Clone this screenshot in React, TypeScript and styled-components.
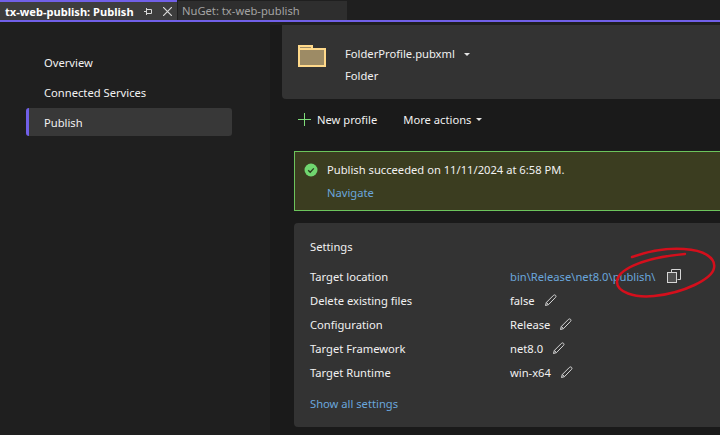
import styled, { createGlobalStyle } from 'styled-components';

const GlobalStyle = createGlobalStyle`
  html, body {
    margin: 0;
    padding: 0;
    background: #1f1f1f;
  }
  * {
    box-sizing: border-box;
  }
`;

const Window = styled.div`
  width: 720px;
  height: 435px;
  overflow: hidden;
  display: flex;
  flex-direction: column;
  font-family: "Noto Sans", "Open Sans", sans-serif;
  font-size: 11.2px;
  line-height: 15px;
  color: #f1f1f1;
  background: #1f1f1f;
`;

const TabBar = styled.div`
  height: 22px;
  flex: none;
  display: flex;
  align-items: flex-end;
  background: #1f1f1f;
  border-bottom: 2px solid #7160e8;
`;

const ActiveTab = styled.div`
  width: 177px;
  height: 20px;
  display: flex;
  align-items: center;
  padding: 0 0 0 5px;
  background: #3d3d3d;
  border-top: 2px solid #7160e8;
  font-weight: 700;
  font-size: 11.1px;
  white-space: nowrap;
  color: #ffffff;
`;

const TabTitle = styled.span`
  width: 139px;
  flex: none;
`;

const TabIcon = styled.span`
  display: flex;
  align-items: center;
  margin-right: 10px;
  color: #d8d8d8;
`;

const InactiveTab = styled.div`
  width: 169px;
  height: 19px;
  margin-left: 1px;
  display: flex;
  align-items: center;
  padding-left: 4px;
  background: #2e2e2e;
  color: #a3a3a3;
  white-space: nowrap;
`;

const Body = styled.div`
  flex: 1;
  display: flex;
  min-height: 0;
`;

const Sidebar = styled.nav`
  width: 270px;
  flex: none;
  padding: 26px 38px 0 26px;
  display: flex;
  flex-direction: column;
  gap: 2px;
`;

const NavItem = styled.div<{ $active?: boolean }>`
  height: 28px;
  display: flex;
  align-items: center;
  padding-left: 15px;
  border-radius: 3px;
  border-left: 3px solid ${p => (p.$active ? '#7160e8' : 'transparent')};
  background: ${p => (p.$active ? '#383838' : 'transparent')};
`;

const Main = styled.main`
  flex: 1;
  min-width: 0;
  margin-top: 3px;
  padding: 0 0 0 12px;
  background: #1a1a1a;
  display: flex;
  flex-direction: column;
`;

const ProfileCard = styled.section`
  height: 74px;
  flex: none;
  display: flex;
  align-items: flex-start;
  gap: 19px;
  padding: 20px 0 0 16px;
  background: #333333;
  border-radius: 0 0 0 4px;
`;

const ProfileText = styled.div`
  display: flex;
  flex-direction: column;
  gap: 7px;
  margin-top: 1px;
`;

const ProfileName = styled.div`
  display: flex;
  align-items: center;
  gap: 9px;
`;

const Caret = styled.span`
  display: inline-block;
  width: 0;
  height: 0;
  margin-top: 1px;
  border-left: 3px solid transparent;
  border-right: 3px solid transparent;
  border-top: 3px solid #e6e6e6;
`;

const Toolbar = styled.div`
  height: 42px;
  flex: none;
  display: flex;
  align-items: center;
  padding: 0 0 2px 16px;
  gap: 26px;
`;

const ToolButton = styled.div`
  display: flex;
  align-items: center;
  gap: 6px;
`;

const MoreButton = styled(ToolButton)`
  gap: 5px;
`;

const Stack = styled.div`
  margin-left: 12px;
  margin-top: 10px;
  display: flex;
  flex-direction: column;
  gap: 12px;
`;

const Banner = styled.section`
  height: 60px;
  display: flex;
  gap: 9px;
  padding: 11px 0 0 9px;
  background: #3b3d20;
  border: 1px solid #6cc45c;
  border-right: none;
`;

const BannerText = styled.div`
  display: flex;
  flex-direction: column;
  gap: 8px;
  margin-top: -1px;
`;

const Link = styled.span`
  color: #6aa6dc;
`;

const SettingsCard = styled.section`
  height: 204px;
  padding: 16px 0 0 16px;
  background: #333333;
  border-radius: 4px 0 0 4px;
  position: relative;
`;

const CardTitle = styled.div`
  height: 15px;
  margin-bottom: 10px;
`;

const SettingRow = styled.div`
  height: 24px;
  display: grid;
  grid-template-columns: 200px 1fr;
  align-items: center;
`;

const SettingValue = styled.div`
  display: flex;
  align-items: center;
  gap: 9px;
`;

const ShowAll = styled(Link)`
  display: block;
  margin-top: 12px;
`;

const CopyButton = styled.span`
  display: flex;
  margin-left: 2px;
`;

const Scribble = styled.svg`
  position: absolute;
  left: 320px;
  top: 23px;
  pointer-events: none;
`;

const Folder = () => (
  <svg width="28" height="22" viewBox="0 0 28 22" fill="none">
    <path d="M1 1h13v3h13v17H1z" fill="#9d8b65" stroke="#ffd98a" strokeWidth="2" />
    <path d="M1 4h13" stroke="#ffd98a" strokeWidth="2" />
  </svg>
);

const PlusIcon = () => (
  <svg width="13" height="13" viewBox="0 0 13 13" stroke="#7fdc7a">
    <path d="M6.5 0v13M0 6.5h13" />
  </svg>
);

const PinIcon = () => (
  <svg width="9" height="9" viewBox="0 0 9 9" fill="none" stroke="currentColor">
    <path d="M0 4.5h2.5M2.5 2.5h5v4h-5zM2.5 1v7" />
  </svg>
);

const CloseIcon = () => (
  <svg width="9" height="9" viewBox="0 0 9 9" fill="none" stroke="currentColor" strokeWidth="1.2">
    <path d="M0 0l9 9M9 0L0 9" />
  </svg>
);

const SuccessIcon = () => (
  <svg width="14" height="14" viewBox="0 0 14 14" fill="none">
    <circle cx="7" cy="7" r="6.5" fill="#70d66f" />
    <path d="M4.2 7.2l2 2 3.6-3.8" stroke="#2a3a1e" strokeWidth="1.3" />
  </svg>
);

const Pencil = () => (
  <svg width="13" height="13" viewBox="0 0 13 13" fill="none" stroke="#d6d6d6">
    <path d="M1.5 11.5l.8-3L9.5 1.3c.6-.6 1.6-.5 2.1.1.5.6.5 1.4 0 1.9L4.5 10.6z" />
    <path d="M2.3 8.5l2.2 2.1" />
  </svg>
);

const CopyIcon = () => (
  <svg width="14" height="14" viewBox="0 0 14 14" fill="none" stroke="#d6d6d6">
    <path d="M4.5 3.5v-3h9v10h-3" />
    <rect x="0.5" y="3.5" width="9" height="10" fill="#505050" />
  </svg>
);

const settings = [
  { label: 'Delete existing files', value: 'false' },
  { label: 'Configuration', value: 'Release' },
  { label: 'Target Framework', value: 'net8.0' },
  { label: 'Target Runtime', value: 'win-x64' },
];

export default function App() {
  return (
    <>
      <GlobalStyle />
      <Window>
        <TabBar>
          <ActiveTab>
            <TabTitle>tx-web-publish: Publish</TabTitle>
            <TabIcon><PinIcon /></TabIcon>
            <TabIcon><CloseIcon /></TabIcon>
          </ActiveTab>
          <InactiveTab>NuGet: tx-web-publish</InactiveTab>
        </TabBar>
        <Body>
          <Sidebar>
            <NavItem>Overview</NavItem>
            <NavItem>Connected Services</NavItem>
            <NavItem $active>Publish</NavItem>
          </Sidebar>
          <Main>
            <ProfileCard>
              <Folder />
              <ProfileText>
                <ProfileName>FolderProfile.pubxml <Caret /></ProfileName>
                <div>Folder</div>
              </ProfileText>
            </ProfileCard>
            <Toolbar>
              <ToolButton>
                <PlusIcon />
                New profile
              </ToolButton>
              <MoreButton>More actions <Caret /></MoreButton>
            </Toolbar>
            <Stack>
              <Banner>
                <SuccessIcon />
                <BannerText>
                  <div>Publish succeeded on 11/11/2024 at 6:58 PM.</div>
                  <Link>Navigate</Link>
                </BannerText>
              </Banner>
              <SettingsCard>
                <CardTitle>Settings</CardTitle>
                <SettingRow>
                  <div>Target location</div>
                  <SettingValue>
                    <Link>bin\Release\net8.0\publish\</Link>
                    <CopyButton><CopyIcon /></CopyButton>
                  </SettingValue>
                </SettingRow>
                {settings.map(s => (
                  <SettingRow key={s.label}>
                    <div>{s.label}</div>
                    <SettingValue>{s.value} <Pencil /></SettingValue>
                  </SettingRow>
                ))}
                <ShowAll>Show all settings</ShowAll>
                <Scribble width="106" height="56" viewBox="0 0 106 56" fill="none">
                  <path
                    d="M18 11C35 5 55 2 70 3C90 4 102 12 100 22C98 33 70 47 40 50C20 52 3 46 3 36C3 25 25 12 71 8"
                    stroke="#d40f1c"
                    strokeWidth="2.5"
                    strokeLinecap="round"
                  />
                </Scribble>
              </SettingsCard>
            </Stack>
          </Main>
        </Body>
      </Window>
    </>
  );
}
